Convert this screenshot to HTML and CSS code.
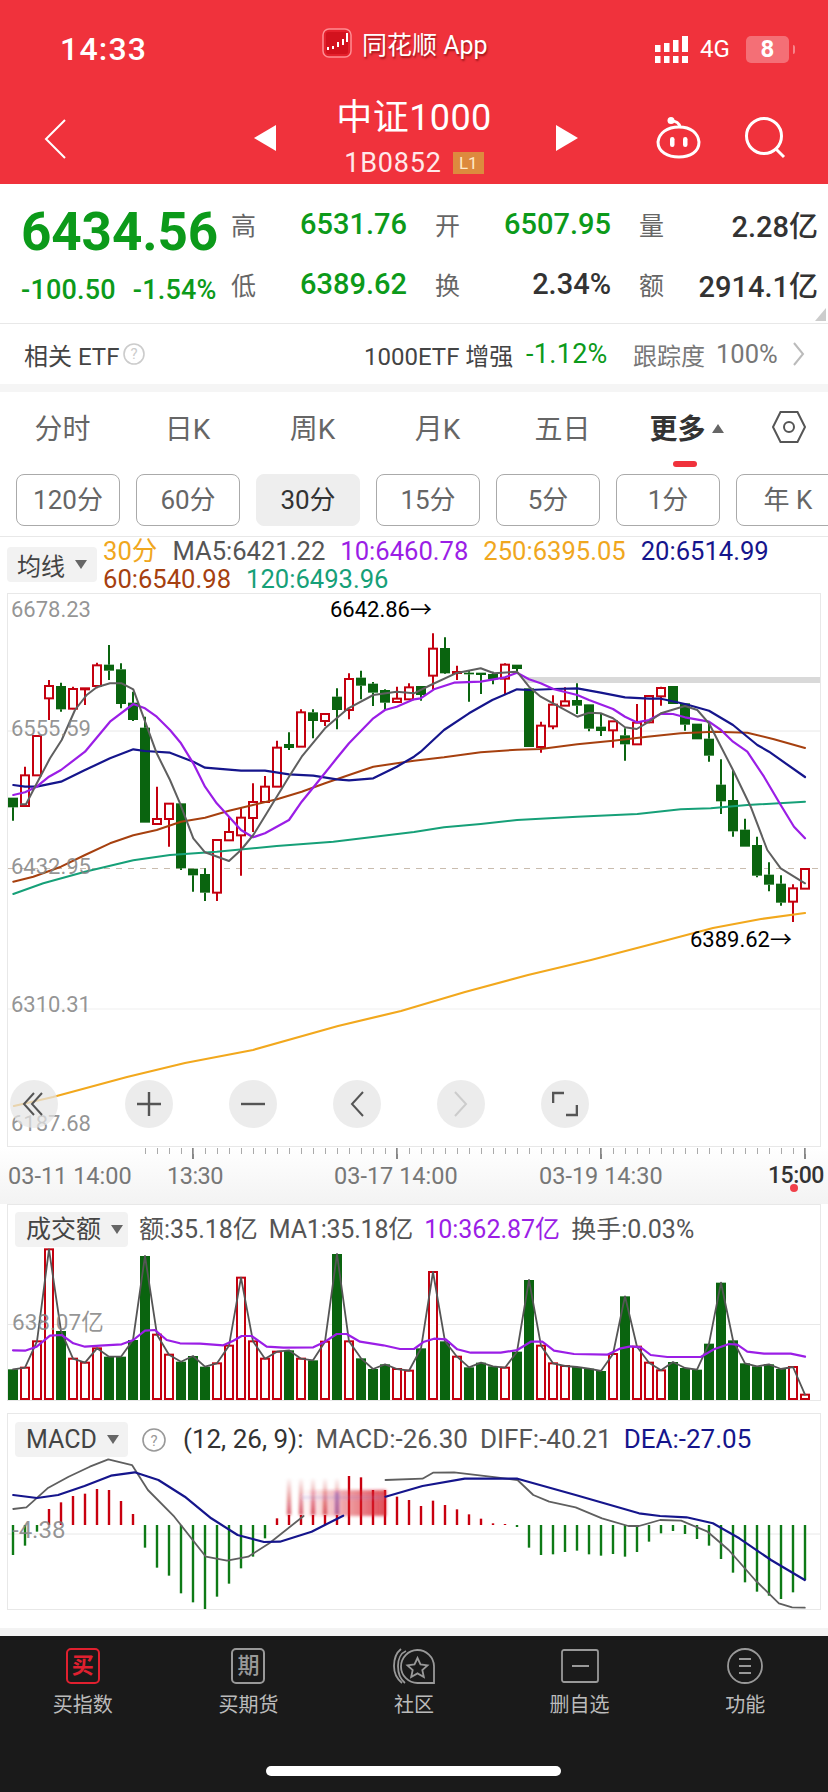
FILE: index.html
```html
<!DOCTYPE html>
<html lang="zh">
<head>
<meta charset="utf-8">
<title>中证1000</title>
<link rel="stylesheet" href="styles.css">
</head>
<body>
<div class="page">
  <header class="header">
    <div class="status">
      <div class="time">14:33</div>
      <div class="app">
        <svg class="app-icon" viewBox="0 0 30 30"><rect x="1" y="1" width="28" height="28" rx="6" fill="#e5202c" stroke="#ff8d93" stroke-width="1.500"/><rect x="4" y="4" width="22" height="22" rx="2" fill="#d3121e"/><path d="M6 19v3M11 18v3M16 14v5M21 11v6M25 5v9" stroke="#fff" stroke-width="2"/></svg>
        <span class="app-name">同花顺 App</span>
      </div>
      <div class="sys">
        <svg class="signal" width="34" height="27" viewBox="0 0 34 27"><path fill="#fff" d="M0 9h5.500v7H0zM9 7h5.500v9H9zM18 4h5.500v12H18zM27 0h6v16h-6zM0 20h5.500v7H0zM9 20h5.500v7H9zM18 20h5.500v7H18zM27 20h6v7h-6z"/></svg>
        <span class="net">4G</span>
        <span class="battery">8</span>
        <span class="nub"></span>
      </div>
    </div>
    <div class="nav">
      <svg class="back" width="22" height="40" viewBox="0 0 22 40"><path d="M21 1 2 20l19 19" fill="none" stroke="#fff" stroke-width="2"/></svg>
      <svg class="tri-l" width="22" height="26" viewBox="0 0 22 26"><path d="M22 0v26L0 13Z" fill="#fff"/></svg>
      <div class="title">
        <div class="title-main">中证1000</div>
        <div class="title-sub"><span>1B0852</span><span class="badge">L1</span></div>
      </div>
      <svg class="tri-r" width="22" height="26" viewBox="0 0 22 26"><path d="M0 0v26l22-13Z" fill="#fff"/></svg>
      <svg class="robot" width="48" height="42" viewBox="0 0 48 42"><g fill="none" stroke="#fff" stroke-width="3"><path d="M16 4c6 0 8 2 9 6"/><path d="M24 10c12 0 19 6 20 15 0 10-9 15-20 15S3 35 3 25C4 16 12 10 24 10Z"/></g><circle cx="16" cy="3.500" r="3.500" fill="#fff"/><rect x="15" y="20" width="4.500" height="10" rx="2.200" fill="#fff"/><rect x="28" y="20" width="4.500" height="10" rx="2.200" fill="#fff"/></svg>
      <svg class="search" width="42" height="42" viewBox="0 0 42 42"><circle cx="20" cy="19" r="17.500" fill="none" stroke="#fff" stroke-width="3"/><path d="M32 32l8 8" stroke="#fff" stroke-width="3"/></svg>
    </div>
  </header>

  <section class="quote">
    <div class="price">
      <div class="price-main">6434.56</div>
      <div class="price-sub"><span>-100.50</span><span>-1.54%</span></div>
    </div>
    <div class="stats">
      <div class="stat"><span class="k">高</span><span class="v up">6531.76</span></div>
      <div class="stat"><span class="k">开</span><span class="v up">6507.95</span></div>
      <div class="stat"><span class="k">量</span><span class="v">2.28亿</span></div>
      <div class="stat"><span class="k">低</span><span class="v up">6389.62</span></div>
      <div class="stat"><span class="k">换</span><span class="v">2.34%</span></div>
      <div class="stat"><span class="k">额</span><span class="v">2914.1亿</span></div>
    </div>
    <span class="corner"></span>
  </section>

  <section class="etf">
    <span class="etf-name">相关 ETF</span>
    <svg class="q-icon" width="22" height="22" viewBox="0 0 22 22"><circle cx="11" cy="11" r="10" fill="none" stroke="#ccc" stroke-width="1.600"/><text x="11" y="16" text-anchor="middle" class="q-text">?</text></svg>
    <span class="etf-fund">1000ETF 增强</span>
    <span class="etf-chg">-1.12%</span>
    <span class="etf-k">跟踪度</span>
    <span class="etf-val">100%</span>
    <svg width="12" height="24" viewBox="0 0 12 24"><path d="M1 1l9 11-9 11" fill="none" stroke="#bbb" stroke-width="2"/></svg>
  </section>

  <nav class="tabs">
    <span class="tab">分时</span>
    <span class="tab">日K</span>
    <span class="tab">周K</span>
    <span class="tab">月K</span>
    <span class="tab">五日</span>
    <span class="tab tab-on">更多<i class="tab-caret"></i></span>
    <span class="tab tab-hex"><svg width="36" height="34" viewBox="0 0 36 34"><path d="M9.500 2h17L34 17l-7.500 15h-17L2 17Z" fill="none" stroke="#555" stroke-width="2"/><circle cx="18" cy="17" r="5" fill="none" stroke="#555" stroke-width="2"/></svg></span>
  </nav>

  <div class="periods">
    <span class="period">120分</span>
    <span class="period">60分</span>
    <span class="period period-on">30分</span>
    <span class="period">15分</span>
    <span class="period">5分</span>
    <span class="period">1分</span>
    <span class="period">年 K</span>
  </div>

  <div class="legend">
    <span class="select select-ma">均线<i class="caret"></i></span>
    <div class="legend-text">
      <span class="c-or">30分</span><span class="c-gr">MA5:6421.22</span><span class="c-pu">10:6460.78</span><span class="c-or">250:6395.05</span><span class="c-na">20:6514.99</span><span class="c-br">60:6540.98</span><span class="c-te">120:6493.96</span>
    </div>
  </div>

  <div class="frame frame-main">
    <svg id="main-chart" class="plot" viewBox="8 594 812 552"></svg>
    <span class="ylab y1">6678.23</span>
    <span class="ylab y2">6555.59</span>
    <span class="ylab y3">6432.95</span>
    <span class="ylab y4">6310.31</span>
    <span class="ylab y5">6187.68</span>
    <span class="mark mark-hi">6642.86→</span>
    <span class="mark mark-lo">6389.62→</span>
    <div class="controls">
      <span class="ctl ctl-first"><svg width="28" height="28" viewBox="0 0 28 28"><path d="M14 3 4 14l10 11M22 3 12 14l10 11" fill="none" stroke="#555" stroke-width="2"/></svg></span>
      <span class="ctl"><svg width="26" height="26" viewBox="0 0 26 26"><path d="M13 1v24M1 13h24" stroke="#555" stroke-width="2.400"/></svg></span>
      <span class="ctl"><svg width="24" height="24" viewBox="0 0 24 24"><path d="M0 12h24" stroke="#555" stroke-width="2.400"/></svg></span>
      <span class="ctl"><svg width="16" height="28" viewBox="0 0 16 28"><path d="M14 2 3 14l11 12" fill="none" stroke="#555" stroke-width="2"/></svg></span>
      <span class="ctl"><svg width="16" height="28" viewBox="0 0 16 28"><path d="M2 2l11 12L2 26" fill="none" stroke="#ccc" stroke-width="2"/></svg></span>
      <span class="ctl"><svg width="26" height="26" viewBox="0 0 26 26"><path d="M1 12V2h11M25 14v10H14" fill="none" stroke="#555" stroke-width="2.600"/></svg></span>
    </div>
  </div>

  <div class="axis">
    <div class="ticks"></div>
    <div class="axis-labels">
      <span class="ax ax1">03-11 14:00</span>
      <span class="ax ax2">13:30</span>
      <span class="ax ax3">03-17 14:00</span>
      <span class="ax ax4">03-19 14:30</span>
      <span class="ax ax5">15:00</span>
    </div>
    <i class="axis-dot"></i>
  </div>

  <div class="frame frame-vol">
    <svg id="vol-chart" class="plot" viewBox="8 1205 812 195"></svg>
    <div class="panel-head">
      <span class="select select-vol">成交额<i class="caret"></i></span>
      <span class="c-gr">额:35.18亿</span><span class="c-gr tight">MA1:35.18亿</span><span class="c-pu">10:362.87亿</span><span class="c-gr">换手:0.03%</span>
    </div>
    <span class="ylab y-vol">638.07亿</span>
  </div>

  <div class="frame frame-macd">
    <svg id="macd-chart" class="plot" viewBox="8 1414 812 195"></svg>
    <div class="panel-head panel-macd">
      <span class="select select-vol">MACD<i class="caret"></i></span>
      <svg class="q-macd" width="24" height="24" viewBox="0 0 24 24"><circle cx="12" cy="12" r="11" fill="none" stroke="#999" stroke-width="1.600"/><text x="12" y="18" text-anchor="middle" class="q-text q-text-d">?</text></svg>
      <span class="c-dk">(12, 26, 9):</span><span class="c-gr">MACD:-26.30</span><span class="c-gr">DIFF:-40.21</span><span class="c-na">DEA:-27.05</span>
    </div>
    <span class="ylab y-macd">-4.38</span>
  </div>

  <div class="spacer"></div>

  <footer class="bar">
    <div class="bar-items">
      <div class="bar-item">
        <span class="box box-red">买</span>
        <span class="bar-label">买指数</span>
      </div>
      <div class="bar-item">
        <span class="box">期</span>
        <span class="bar-label">买期货</span>
      </div>
      <div class="bar-item">
        <svg width="42" height="36" viewBox="0 0 42 36"><g fill="none" stroke="#999" stroke-width="1.800"><path d="M8 1C3 5 1 11 1 18s3 13 8 17"/><path d="M12 35C7 31 5 25 5 18S8 5 13 3"/><path d="M41 35V18a16.500 16.500 0 1 0-16.500 17Z"/><path d="M24.500 10l3 6.500 7 .8-5.200 4.700 1.500 7-6.300-3.600-6.300 3.600 1.500-7-5.200-4.700 7-.8Z"/></g></svg>
        <span class="bar-label">社区</span>
      </div>
      <div class="bar-item">
        <svg width="38" height="34" viewBox="0 0 38 34"><rect x="1" y="1" width="36" height="32" rx="2" fill="none" stroke="#999" stroke-width="1.800"/><path d="M11 17h17" stroke="#999" stroke-width="2"/></svg>
        <span class="bar-label">删自选</span>
      </div>
      <div class="bar-item">
        <svg width="36" height="36" viewBox="0 0 36 36"><circle cx="18" cy="18" r="17" fill="none" stroke="#999" stroke-width="1.800"/><path d="M12 11h12M12 18h12M12 25h12" stroke="#999" stroke-width="2"/></svg>
        <span class="bar-label">功能</span>
      </div>
    </div>
    <div class="home"></div>
  </footer>
</div>
<script src="chart.js"></script>
</body>
</html>
```

FILE: styles.css
```css
* { box-sizing: border-box; }
html, body { margin: 0; padding: 0; background: #fff; }
body { font-family: Roboto, "Noto Sans CJK SC", sans-serif; color: #333; }
.page { width: 828px; height: 1792px; overflow: hidden; display: flex; flex-direction: column; }

/* header */
.header { height: 184px; background: #f0323c; color: #fff; flex: none; }
.status { height: 92px; position: relative; display: flex; align-items: center; }
.time { margin-left: 60px; padding-top: 6px; font-size: 32px; font-weight: 500; width: 262px; letter-spacing: 1.2px; }
.app { display: flex; align-items: center; gap: 10px; width: 333px; margin-top: -6px; }
.app-icon { width: 30px; height: 30px; }
.app-name { font-size: 25px; text-shadow: 1px 2px 2px rgba(90,0,0,.55); }
.sys { display: flex; align-items: center; padding-top: 6px; }
.net { font-size: 24px; margin-left: 11px; width: 46px; }
.battery { width: 43px; height: 27px; background: rgba(255,255,255,.3); border-radius: 5px; font-size: 24px; font-weight: 700; text-align: center; line-height: 27px; }
.nub { width: 2px; height: 9px; background: rgba(255,255,255,.4); margin-left: 4px; border-radius: 0 2px 2px 0; }
.nav { height: 92px; display: flex; align-items: center; }
.back { margin-left: 44px; margin-top: 2px; }
.tri-l { margin-left: 188px; }
.title { width: 276px; text-align: center; }
.title-main { font-size: 36px; line-height: 40px; letter-spacing: .4px; }
.title-sub { margin-top: 10px; height: 30px; font-size: 27px; line-height: 30px; display: flex; justify-content: center; align-items: center; gap: 11px; padding-left: 0; letter-spacing: .8px; color: #ffe9ea; }
.badge { width: 31px; height: 22px; line-height: 22px; font-size: 17px; background: #dd8a3e; color: #ffe9c9; letter-spacing: 0; }
.tri-r { margin-left: 4px; }
.robot { margin-left: 77px; }
.search { margin-left: 41px; }

/* quote */
.quote { height: 140px; flex: none; display: flex; position: relative; border-bottom: 1px solid #e8e8e8; }
.price { width: 231px; padding-left: 21px; color: #0c9a1a; }
.price-main { font-size: 53px; font-weight: 700; line-height: 60px; margin-top: 18px; letter-spacing: -.1px; }
.price-sub { display: flex; gap: 17px; font-size: 27px; font-weight: 500; line-height: 30px; margin-top: 13px; letter-spacing: .2px; }
.stats { width: 590px; padding-top: 10px; display: grid; grid-template-columns: 176px 176px 179px; column-gap: 28px; grid-auto-rows: 60px; }
.stat { display: flex; justify-content: space-between; align-items: center; }
.k { font-size: 25px; color: #666; }
.v { font-size: 29px; font-weight: 500; color: #333; }
.up { color: #0c9a1a; }
.corner { position: absolute; right: 2px; bottom: 2px; width: 11px; height: 13px; background: #ccc; clip-path: polygon(100% 0, 100% 100%, 0 100%); }

/* etf */
.etf { height: 60px; flex: none; display: flex; align-items: center; padding-left: 24px; font-size: 24px; color: #444; }
.etf-name { width: 99px; }
.q-text { font: 15px Roboto, sans-serif; fill: #ccc; }
.q-text-d { fill: #999; }
.etf-fund { margin-left: 219px; width: 162px; color: #444; }
.etf-chg { color: #0c9a1a; width: 107px; font-size: 27px; letter-spacing: .3px; }
.etf-k { color: #777; width: 83px; }
.etf-val { color: #777; width: 77px; font-size: 25.500px; }

/* tabs */
.tabs { margin-top: 8px; border-top: 0; height: 74px; flex: none; display: grid; grid-template-columns: repeat(6, 125px) 78px; align-items: center; font-size: 28px; color: #666; text-align: center; padding-bottom: 4px; box-shadow: 0 -8px 0 #f5f5f5; }
.tab { position: relative; }
.tab-on { color: #333; font-weight: 700; margin-left: -2px; }
.tab-on::after { content: ""; position: absolute; left: 50%; margin-left: -14px; bottom: -20px; width: 24px; height: 6px; border-radius: 3px; background: #f0323c; }
.tab-caret { display: inline-block; width: 0; height: 0; margin: 0 0 6px 6px; border: 6px solid transparent; border-top: 0; border-bottom: 9px solid #666; }
.tab-hex { display: flex; justify-content: center; }

.periods { height: 71px; flex: none; display: flex; gap: 16px; padding: 8px 0 0 16px; border-bottom: 1px solid #e8e8e8; overflow: hidden; align-items: flex-start; }
.period { flex: none; width: 104px; height: 52px; border: 1px solid #aaa; border-radius: 8px; font-size: 26px; line-height: 50px; text-align: center; color: #666; }
.period-on { background: #eee; border-color: #eee; color: #333; }

/* legend */
.legend { height: 56px; flex: none; display: flex; position: relative; }
.select { background: #f2f2f2; border-radius: 4px; color: #444; display: flex; align-items: center; font-size: 24px; }
.select-ma { width: 90px; height: 35px; margin: 10px 0 0 7px; padding-left: 10px; }
.caret { width: 0; height: 0; margin-left: 10px; border: 6px solid transparent; border-bottom: 0; border-top: 9px solid #666; }
.legend-text { margin-left: 6px; width: 722px; display: flex; flex-wrap: wrap; column-gap: 15px; font-size: 25.600px; line-height: 28px; }
.c-or { color: #f0a71e; }
.c-gr { color: #555; }
.c-pu { color: #9b1ee6; }
.c-na { color: #15158c; }
.c-br { color: #a6400f; }
.c-te { color: #16a078; }
.c-dk { color: #333; }

/* frames */
.frame { position: relative; margin: 0 7px; border: 1px solid #e8e8e8; flex: none; background: #fff; }
.frame-main { height: 554px; }
.frame-vol { height: 197px; }
.frame-macd { height: 197px; margin-top: 12px; }
.plot { display: block; position: absolute; left: 0; top: 0; width: 812px; height: 100%; }
.ylab { position: absolute; left: 3px; font-size: 22px; line-height: 26px; color: rgba(130,130,130,.85); }
.y1 { top: 3px; }
.y2 { top: 122px; }
.y3 { top: 260px; }
.y4 { top: 398px; }
.y5 { top: 517px; }
.mark { position: absolute; font-size: 22px; line-height: 26px; color: #000; }
.mark-hi { left: 322px; top: 3px; }
.mark-lo { left: 682px; top: 333px; }
.controls { position: absolute; left: 2px; top: 486px; display: flex; gap: 56px; }
.ctl { width: 48px; height: 48px; border-radius: 50%; background: rgba(228,228,228,.72); display: flex; align-items: center; justify-content: center; }
.ctl-first { margin-right: 11px; }

/* axis */
.axis { height: 57px; flex: none; position: relative; background: linear-gradient(#fff, #f3f3f3); padding-top: 1px; }
.ticks { margin-left: 145px; width: 662px; height: 11px; background:
  repeating-linear-gradient(90deg, #aaa 0 1px, transparent 1px 12px) 0 0 / 100% 6px no-repeat,
  repeating-linear-gradient(90deg, transparent 0 47px, #888 47px 49px, transparent 49px 204px) 0 0 / 100% 11px no-repeat; }
.axis-labels { display: flex; font-size: 23.500px; line-height: 28px; color: #777; margin-top: 3px; white-space: nowrap; }
.ax { flex: none; }
.ax1 { margin-left: 8px; width: 159px; }
.ax2 { width: 167px; letter-spacing: -.5px; }
.ax3 { width: 205px; }
.ax4 { width: 229px; }
.ax5 { color: #333; font-size: 23px; font-weight: 500; letter-spacing: -.5px; }
.axis-dot { position: absolute; left: 790px; top: 37px; width: 8px; height: 8px; border-radius: 50%; background: #f0404a; }

.panel-head { position: relative; display: flex; align-items: center; gap: 11px; padding: 7px 0 0 7px; font-size: 25px; line-height: 35px; white-space: nowrap; }
.tight { letter-spacing: -.2px; }
.panel-macd { gap: 12px; font-size: 26px; padding-top: 8px; }
.select-vol { width: 113px; height: 35px; padding-left: 11px; font-size: 25px; justify-content: flex-start; }
.q-macd { margin: 0 5px 0 2px; }
.y-vol { top: 104px; left: 4px; font-size: 22.500px; }
.y-macd { top: 103px; left: 4px; font-size: 24px; }

.spacer { height: 26px; flex: none; background: linear-gradient(#fff 0 18px, #f3f3f3 18px); }

/* bottom bar */
.bar { flex: 1; background: #1a1a1a; display: flex; flex-direction: column; }
.bar-items { display: grid; grid-template-columns: repeat(5, 165.600px); padding-top: 12px; height: 130px; }
.bar-item { display: flex; flex-direction: column; align-items: center; }
.bar-item svg { height: 36px; }
.box { width: 34px; height: 36px; border: 2px solid #999; border-radius: 5px; color: #999; font-size: 22px; line-height: 31px; text-align: center; font-weight: 500; }
.box-red { border-color: #e0202f; color: #e0202f; font-weight: 700; }
.bar-label { margin-top: 6px; font-size: 20px; line-height: 30px; color: #bbb; }
.home { width: 295px; height: 10px; margin-left: 266px; border-radius: 5px; background: #fff; }
```

FILE: chart.js
```js
var SVGNS = 'http://www.w3.org/2000/svg';
var RED = '#c4000f', GREEN = '#0a640f';

function el(parent, name, attrs) {
  var n = document.createElementNS(SVGNS, name);
  for (var k in attrs) n.setAttribute(k, attrs[k]);
  parent.appendChild(n);
  return n;
}
function polyline(parent, pts, color, w) {
  el(parent, 'polyline', {
    points: pts.map(function (p) { return p[0].toFixed(1) + ',' + p[1].toFixed(1); }).join(' '),
    fill: 'none', stroke: color, 'stroke-width': w, 'stroke-linejoin': 'round', 'stroke-linecap': 'round'
  });
}
function line(parent, x1, y1, x2, y2, color, w, dash) {
  var a = { x1: x1, y1: y1, x2: x2, y2: y2, stroke: color, 'stroke-width': w };
  if (dash) a['stroke-dasharray'] = dash;
  el(parent, 'line', a);
}
function X(i) { return 13 + 12 * i; }

/* main chart: [red?, bodyTop, bodyBottom, wickTop, wickBottom] — y in px from 620, x3 */
var K = [
[0,533,562,533,602],[1,466,558,440,558],[1,348,466,348,466],[1,198,235,180,300],[0,198,268,188,275],
[1,207,266,200,268],[1,205,208,205,255],[1,136,198,128,205],[0,134,152,75,180],[0,148,252,130,265],
[0,248,300,215,303],[0,323,608,290,608],[1,597,612,500,612],[1,551,597,551,680],[0,550,745,550,750],
[0,746,766,746,815],[0,762,818,745,843],[1,660,818,660,843],[1,636,661,590,661],[1,593,646,562,767],
[1,546,594,490,636],[1,500,546,468,546],[1,383,500,362,500],[0,372,384,337,390],[1,277,380,268,380],
[0,277,303,268,355],[1,282,303,282,318],[0,230,270,205,328],[1,177,270,160,298],[0,173,197,152,238],
[0,191,218,186,258],[0,210,248,208,270],[1,236,246,200,248],[1,202,238,190,238],[0,198,225,198,242],
[1,86,167,40,210],[0,84,160,52,162],[1,156,159,137,180],[0,158,163,150,245],[0,158,165,158,222],
[0,162,178,155,193],[1,134,176,130,225],[0,134,147,134,160],[0,205,381,205,381],[1,317,381,305,398],
[1,254,319,226,328],[1,244,257,202,258],[0,240,257,190,282],[0,253,326,253,334],[0,320,333,282,348],
[1,304,331,304,383],[0,346,373,325,422],[1,308,373,252,373],[1,228,307,225,310],[1,204,229,200,257],
[0,198,252,198,252],[0,250,314,250,332],[0,311,358,311,358],[0,356,407,310,425],[0,494,544,418,582],
[0,540,634,450,650],[0,629,680,596,680],[0,675,767,650,772],[0,764,794,727,814],[0,791,848,766,857],
[1,805,845,793,906],[1,747,806,747,806]
];
function join(a, b) {
  return a.map(function (p) { return [p[0] / 3, 620 + p[1] / 3]; })
    .concat(b.map(function (p) { return [414 + p[0] / 3, 620 + p[1] / 3]; }));
}
var MA5 = join([[63,553],[78,553],[105,500],[150,415],[185,360],[225,270],[260,225],[290,202],[330,190],[365,190],[400,208],[430,290],[470,400],[510,480],[540,550],[580,655],[615,697],[687,723],[723,690],[760,645],[800,580],[867,470],[905,410],[975,325],[1045,265],[1120,225],[1190,215],[1242,220]],
  [[50,195],[125,160],[200,145],[240,160],[309,155],[345,200],[380,230],[490,290],[525,278],[560,280],[597,295],[633,322],[668,327],[705,305],[741,280],[813,258],[850,270],[885,310],[921,380],[957,450],[1010,560],[1060,690],[1100,745],[1173,790]]);
var MA10 = join([[40,525],[75,517],[110,500],[147,470],[183,450],[255,395],[330,305],[400,252],[435,265],[470,290],[510,330],[543,370],[580,430],[615,500],[650,550],[687,590],[723,630],[759,652],[795,640],[867,600],[905,545],[950,490],[1010,415],[1047,370],[1120,295],[1155,270],[1190,260],[1242,238]],
  [[20,235],[60,208],[120,188],[200,185],[273,172],[309,158],[345,178],[380,190],[420,208],[490,225],[525,240],[597,267],[633,290],[668,307],[705,300],[741,281],[777,282],[813,292],[885,305],[921,330],[957,365],[1000,395],[1050,470],[1100,555],[1140,620],[1173,655]]);
var MA20 = join([[40,495],[75,500],[110,500],[183,485],[255,450],[330,415],[400,388],[435,393],[510,398],[580,425],[615,443],[723,452],[795,452],[867,463],[940,467],[1010,478],[1047,481],[1120,475],[1190,440],[1242,410]],
  [[20,395],[90,330],[165,280],[235,240],[309,208],[345,210],[420,207],[490,205],[560,218],[633,232],[705,236],[741,236],[813,252],[885,272],[957,315],[1030,375],[1065,395],[1173,471]]);
var MA60 = join([[40,785],[100,770],[183,740],[255,705],[330,670],[400,646],[470,630],[543,605],[615,593],[687,572],[759,555],[831,538],[905,515],[975,490],[1047,465],[1120,440],[1242,422]],
  [[90,412],[200,397],[309,389],[380,387],[490,373],[597,362],[700,350],[800,340],[900,335],[1000,338],[1080,358],[1173,384]]);
var MA120 = join([[40,822],[130,790],[255,755],[400,721],[510,705],[650,695],[830,678],[1000,665],[1242,636]],
  [[90,622],[200,612],[309,600],[490,590],[670,582],[800,568],[890,565],[1000,555],[1173,545]]);
var MA250 = [[14,1106],[53,1097],[127,1077],[185,1063],[253,1050],[338,1026],[401,1011],[465,992],[528,975],[591,960],[660,942],[713,928],[761,919],[805,913]];

(function drawMain() {
  var s = document.getElementById('main-chart');
  line(s, 8, 731, 820, 731, '#e8e8e8', 1);
  line(s, 8, 1009, 820, 1009, '#efefef', 1);
  el(s, 'rect', { x: 524, y: 677, width: 296, height: 6, fill: '#d9d9d9' });
  line(s, 8, 868.500, 820, 868.500, '#c9bcae', 1, '6 6');
  K.forEach(function (c, i) {
    var x = X(i), col = c[0] ? RED : GREEN;
    var t = 620 + c[1] / 3, b = 620 + c[2] / 3, wt = 620 + c[3] / 3, wb = 620 + c[4] / 3;
    if (wt < t) line(s, x, wt, x, t, col, 2);
    if (wb > b) line(s, x, b, x, wb, col, 2);
    if (c[0]) {
      el(s, 'rect', { x: x - 4, y: t, width: 8, height: b - t, fill: '#fff', stroke: col, 'stroke-width': 2 });
    } else {
      el(s, 'rect', { x: x - 5, y: t, width: 10, height: b - t, fill: col });
    }
  });
  polyline(s, MA120, '#16a078', 2);
  polyline(s, MA60, '#a6400f', 2);
  polyline(s, MA250, '#f2a81d', 2.200);
  polyline(s, MA20, '#15158c', 2.200);
  polyline(s, MA10, '#9b1ee6', 2.200);
  polyline(s, MA5, '#5f5f5f', 2);
})();

/* volume: bar tops, y in px from 1200, x3; red flags */
var VT = [508,503,424,148,393,476,488,445,470,470,420,168,404,464,485,468,500,490,437,233,424,476,455,451,476,481,425,162,424,475,507,493,507,512,445,216,424,470,502,488,499,503,455,240,437,490,498,501,506,513,462,289,440,488,511,486,504,509,431,248,421,490,499,493,507,501,584];
var VR = [0,1,1,1,0,1,1,1,0,0,0,0,1,1,0,0,0,1,1,1,1,1,1,0,1,0,1,0,1,0,0,0,1,1,0,1,0,1,0,0,0,1,0,0,1,1,1,0,0,0,1,0,1,1,1,0,0,0,0,0,0,0,0,0,0,1,1];
var V10 = [[39,451],[75,452],[110,440],[150,407],[185,405],[220,430],[255,440],[300,437],[365,433],[400,420],[435,392],[465,390],[500,420],[540,430],[600,431],[670,436],[700,422],[725,408],[755,408],[800,440],[850,443],[940,442],[975,425],[1010,402],[1040,402],[1080,425],[1150,436],[1200,447]].map(function (p) { return [p[0] / 3, 1200 + p[1] / 3]; })
  .concat([[0,447],[30,425],[60,416],[95,418],[130,448],[170,458],[260,458],[310,450],[350,425],[385,425],[420,452],[480,462],[580,464],[620,445],[650,439],[680,442],[710,465],[760,471],[860,471],[900,448],[945,432],[970,434],[1000,455],[1050,461],[1130,461],[1173,470]].map(function (p) { return [414 + p[0] / 3, 1200 + p[1] / 3]; }));

(function drawVol() {
  var s = document.getElementById('vol-chart');
  line(s, 8, 1324.500, 820, 1324.500, '#e8e8e8', 1);
  VT.forEach(function (t, i) {
    var x = X(i), y = 1200 + t / 3;
    if (VR[i]) {
      el(s, 'rect', { x: x - 4, y: y, width: 8, height: 1400 - y - 1, fill: '#fff', stroke: RED, 'stroke-width': 2 });
    } else {
      el(s, 'rect', { x: x - 5, y: y, width: 10, height: 1400 - y, fill: GREEN });
    }
  });
  polyline(s, VT.map(function (t, i) { return [X(i), 1200 + t / 3]; }), '#555', 1.800);
  polyline(s, V10, '#9b1ee6', 2.200);
})();

/* macd: bar ends, y in px from 1400, x3; zero axis at 375 */
var MB = [465,437,395,327,307,288,281,267,270,303,342,443,503,527,580,607,627,590,551,505,470,415,355,345,345,345,345,345,228,232,270,270,290,300,318,302,315,328,343,356,370,372,381,443,465,463,456,452,463,467,462,470,456,425,400,393,402,417,437,477,518,547,575,587,597,577,540];
var DIFF1 = [[25,327],[50,322],[90,265],[130,230],[170,200],[205,178],[250,195],[280,270],[330,350],[390,470],[430,482],[470,470],[510,430],[575,348]];
var DIFF2 = [[730,240],[800,236],[820,218],[860,217],[940,232],[980,240],[1010,285],[1040,305],[1090,322],[1140,355],[1190,378],[1210,378],[1250,360],[1290,362],[1340,395],[1380,450],[1430,540],[1475,610],[1500,622],[1524,623]];
var DEA1 = [[25,285],[70,294],[110,285],[160,258],[210,227],[255,217],[300,240],[350,290],[400,355],[450,405],[500,426],[530,425],[590,395],[650,347]];
var DEA2 = [[730,290],[800,258],[880,236],[980,236],[1090,285],[1210,340],[1250,348],[1300,352],[1350,370],[1400,415],[1460,480],[1524,540]];
function mp(a) { return a.map(function (p) { return [p[0] / 1.8937, 1400 + p[1] / 3]; }); }

(function drawMacd() {
  var s = document.getElementById('macd-chart');
  var defs = el(s, 'defs', {});
  var g1 = el(defs, 'linearGradient', { id: 'fade-v', x1: 0, y1: 0, x2: 0, y2: 1 });
  el(g1, 'stop', { offset: '0', 'stop-color': '#c4000f', 'stop-opacity': '.04' });
  el(g1, 'stop', { offset: '1', 'stop-color': '#c4000f', 'stop-opacity': '.7' });
  var g2 = el(defs, 'linearGradient', { id: 'fade-h', x1: 0, y1: 0, x2: 1, y2: 0 });
  el(g2, 'stop', { offset: '0', 'stop-color': '#d81f2b', 'stop-opacity': '0' });
  el(g2, 'stop', { offset: '1', 'stop-color': '#d81f2b', 'stop-opacity': '.8' });
  var f = el(defs, 'filter', { id: 'soft', x: '-20%', y: '-20%', width: '140%', height: '140%' });
  el(f, 'feGaussianBlur', { stdDeviation: '1.500' });

  line(s, 8, 1534, 820, 1534, '#e8e8e8', 1);
  MB.forEach(function (e, i) {
    var x = X(i), y = 1400 + e / 3, red = e < 375;
    line(s, x, 1525, x, y, red ? '#c8000f' : '#0e7a16', 2.400);
  });
  var soft = el(s, 'g', { filter: 'url(#soft)' });
  [289, 301, 313, 325, 337].forEach(function (x) {
    el(soft, 'rect', { x: x - 2, y: 1479, width: 4, height: 36, fill: 'url(#fade-v)' });
  });
  el(soft, 'rect', { x: 302, y: 1490, width: 84, height: 26, fill: 'url(#fade-h)' });
  el(soft, 'rect', { x: 335, y: 1492, width: 4, height: 22, fill: '#7c6fd8', opacity: '.5' });
  el(soft, 'rect', { x: 302, y: 1496, width: 84, height: 3, fill: '#8a80d8', opacity: '.22' });
  polyline(s, mp(DIFF1), '#5f5f5f', 1.800);
  polyline(s, mp(DIFF2), '#5f5f5f', 1.800);
  polyline(s, mp(DEA1), '#15158c', 2.200);
  polyline(s, mp(DEA2), '#15158c', 2.200);
})();
```
